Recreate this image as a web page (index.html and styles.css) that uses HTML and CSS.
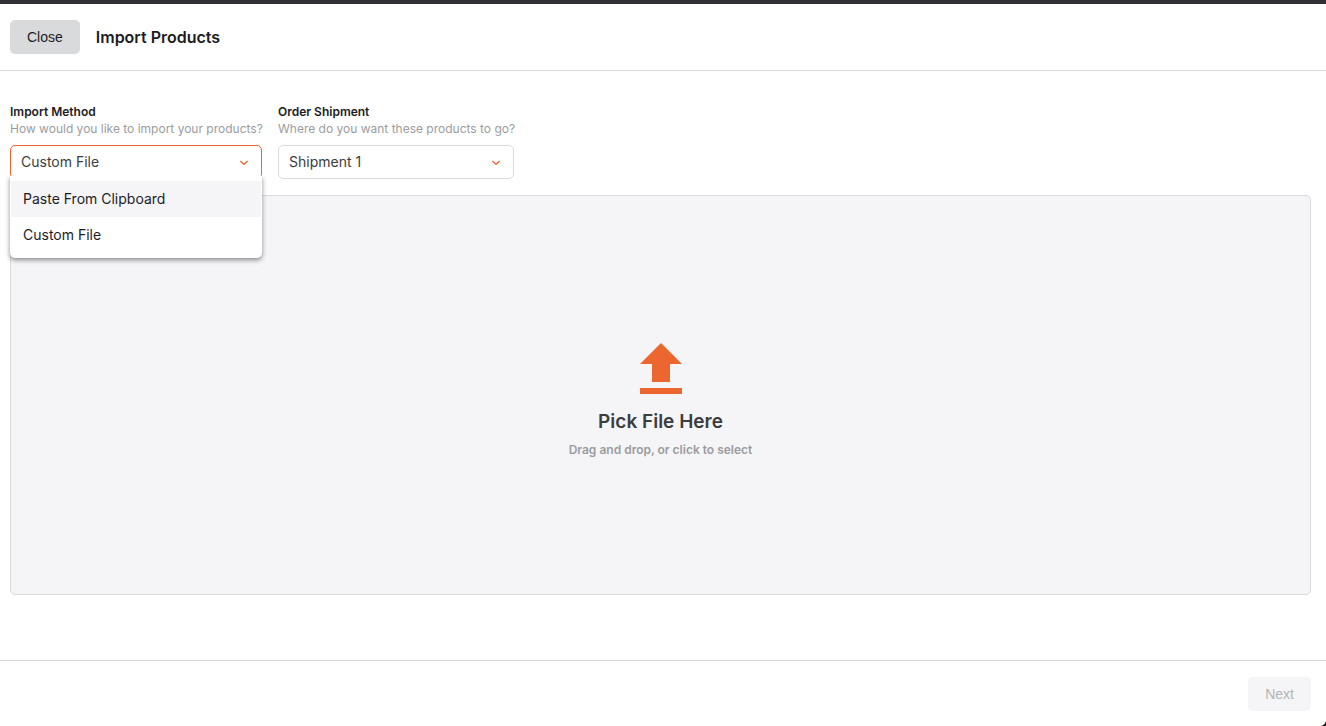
FILE: index.html
```html
<!DOCTYPE html>
<html lang="en">
<head>
<meta charset="utf-8">
<meta name="viewport" content="width=device-width, initial-scale=1">
<title>Import Products</title>
<link rel="stylesheet" href="styles.css">
</head>
<body>
<div class="modal">
  <header class="header">
    <button type="button" class="button">Close</button>
    <h1 class="title">Import Products</h1>
  </header>
  <main class="content">
    <div class="fields">
      <div class="field field-method">
        <label class="label" for="method">Import Method</label>
        <p class="hint" id="method-hint">How would you like to import your products?</p>
        <div class="select select-open">
          <select class="select-input" id="method" aria-describedby="method-hint">
            <option>Paste From Clipboard</option>
            <option selected>Custom File</option>
          </select>
          <svg class="chevron" viewBox="0 0 10 6" aria-hidden="true"><path d="M1.4 1 5 4.4 8.6 1"/></svg>
          <div class="menu">
            <button type="button" class="menu-item menu-item-active">Paste From Clipboard</button>
            <button type="button" class="menu-item">Custom File</button>
          </div>
        </div>
      </div>
      <div class="field field-shipment">
        <label class="label" for="shipment">Order Shipment</label>
        <p class="hint" id="shipment-hint">Where do you want these products to go?</p>
        <div class="select">
          <select class="select-input" id="shipment" aria-describedby="shipment-hint">
            <option>Shipment 1</option>
          </select>
          <svg class="chevron" viewBox="0 0 10 6" aria-hidden="true"><path d="M1.4 1 5 4.4 8.6 1"/></svg>
        </div>
      </div>
    </div>
    <button type="button" class="dropzone">
      <svg class="upload" viewBox="0 0 42 51" aria-hidden="true"><path d="M21 0 42 21H30V39H12V21H0ZM0 45H42V51H0Z"/></svg>
      <span class="drop-title">Pick File Here</span>
      <span class="drop-hint">Drag and drop, or click to select</span>
    </button>
  </main>
  <footer class="footer">
    <button type="button" class="button button-next" disabled>Next</button>
  </footer>
</div>
<svg class="corner" viewBox="0 0 5 5" aria-hidden="true"><path d="M5 0V5H0Q4 4 5 0Z"/></svg>
</body>
</html>
```
FILE: styles.css
```css
* {
  box-sizing: border-box;
}

body {
  margin: 0;
  overflow: hidden;
  background: #fff;
  color: #1c1c1e;
  font-family: Inter, "Liberation Sans", sans-serif;
  font-size: 14px;
}

button,
select {
  font: inherit;
}

.modal {
  display: flex;
  flex-direction: column;
  min-height: 100vh;
  border-top: 4px solid #303136;
}

.header {
  display: flex;
  align-items: center;
  gap: 16px;
  padding: 16px 10px;
  border-bottom: 1px solid #d9dadc;
}

.button {
  height: 34px;
  padding: 0 17px;
  border: 0;
  border-radius: 5px;
  background: #d9dadc;
  color: #1c1c1e;
  font-family: "Liberation Sans", sans-serif;
}

.title {
  margin: 0;
  font-size: 16px;
  font-weight: 600;
  line-height: 20px;
}

.content {
  display: flex;
  flex: 1;
  flex-direction: column;
  padding: 32px 15px 65px 10px;
}

.fields {
  display: flex;
  gap: 16px;
  margin-bottom: 16px;
}

.field-method {
  width: 252px;
}

.field-shipment {
  width: 236px;
}

.label {
  display: block;
  font-size: 12px;
  font-weight: 600;
  line-height: 17px;
}

.hint {
  margin: 0 0 8px;
  color: #9b9c9e;
  font-size: 12px;
  line-height: 17px;
  white-space: nowrap;
}

.select {
  position: relative;
}

.select-input {
  display: block;
  width: 100%;
  height: 34px;
  padding: 0 24px 2px 10px;
  border: 1px solid #d9dadc;
  border-radius: 5px;
  appearance: none;
  background: #fff;
  color: #3c3d40;
}

.select-open .select-input {
  border-color: #ec662f;
}

.chevron {
  position: absolute;
  top: 15px;
  right: 13px;
  width: 10px;
  height: 6px;
  fill: none;
  stroke: #ec662f;
  stroke-width: 1.4;
}

.menu {
  position: absolute;
  top: 31px;
  left: 0;
  width: 100%;
  padding: 5px 1px;
  border-radius: 0 0 5px 5px;
  background: #fff;
  box-shadow: 0 2px 5px rgba(0, 0, 0, 0.45);
  clip-path: inset(0 -10px -12px -10px);
}

.menu-item {
  display: block;
  width: 100%;
  height: 36px;
  padding: 0 12px 2px;
  border: 0;
  background: #fff;
  color: #1c1c1e;
  text-align: left;
}

.menu-item-active {
  background: #f5f5f8;
}

.dropzone {
  display: flex;
  flex: 1;
  flex-direction: column;
  align-items: center;
  justify-content: center;
  padding: 24px;
  border: 1px solid #d9dadc;
  border-radius: 5px;
  background: #f5f5f8;
}

.upload {
  width: 42px;
  height: 51px;
  margin-top: 10px;
  fill: #ec662f;
}

.drop-title {
  margin-top: 16px;
  color: #3c3d40;
  font-size: 19px;
  font-weight: 600;
  line-height: 24px;
}

.drop-hint {
  margin-top: 8px;
  color: #9b9c9e;
  font-size: 12px;
  font-weight: 600;
  line-height: 16px;
}

.footer {
  display: flex;
  justify-content: flex-end;
  padding: 16px 15px 15px;
  border-top: 1px solid #d9dadc;
}

.button-next {
  background: #f5f5f8;
  color: #b3b4b6;
}

.corner {
  position: fixed;
  right: 0;
  bottom: 0;
  width: 5px;
  height: 5px;
  fill: #231815;
}
```
